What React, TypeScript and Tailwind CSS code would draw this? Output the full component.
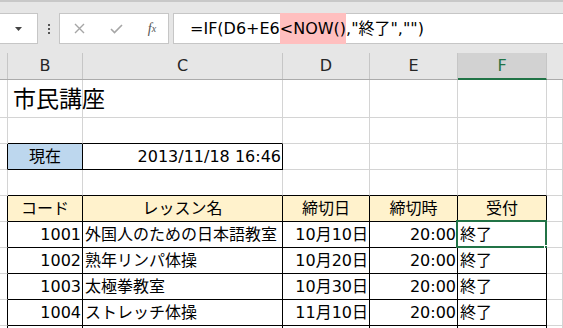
import React from "react";

const FONT = { fontFamily: '"DejaVu Sans", "Noto Sans CJK JP", sans-serif' };

type Cell = { text?: string; align?: "l" | "r" | "c"; bg?: string };

const COLS = 7;
const rowHeights = [38, 26, 26, 26, 26, 26, 26, 26, 26, 26];

function isBlack(r: number, c: number) {
  if (r === 2 && (c === 1 || c === 2)) return true;
  if (r >= 4 && r <= 9 && c >= 1 && c <= 5) return true;
  return false;
}

const data: Record<string, Cell> = {
  "2-1": { text: "現在", align: "c", bg: "bg-[#bdd7ee]" },
  "2-2": { text: "2013/11/18 16:46", align: "r" },
  "4-1": { text: "コード", align: "c", bg: "bg-[#fff2cc]" },
  "4-2": { text: "レッスン名", align: "c", bg: "bg-[#fff2cc]" },
  "4-3": { text: "締切日", align: "c", bg: "bg-[#fff2cc]" },
  "4-4": { text: "締切時", align: "c", bg: "bg-[#fff2cc]" },
  "4-5": { text: "受付", align: "c", bg: "bg-[#fff2cc]" },
  "5-1": { text: "1001", align: "r" },
  "5-2": { text: "外国人のための日本語教室", align: "l" },
  "5-3": { text: "10月10日", align: "r" },
  "5-4": { text: "20:00", align: "r" },
  "5-5": { text: "終了", align: "l" },
  "6-1": { text: "1002", align: "r" },
  "6-2": { text: "熟年リンパ体操", align: "l" },
  "6-3": { text: "10月20日", align: "r" },
  "6-4": { text: "20:00", align: "r" },
  "6-5": { text: "終了", align: "l" },
  "7-1": { text: "1003", align: "r" },
  "7-2": { text: "太極拳教室", align: "l" },
  "7-3": { text: "10月30日", align: "r" },
  "7-4": { text: "20:00", align: "r" },
  "7-5": { text: "終了", align: "l" },
  "8-1": { text: "1004", align: "r" },
  "8-2": { text: "ストレッチ体操", align: "l" },
  "8-3": { text: "11月10日", align: "r" },
  "8-4": { text: "20:00", align: "r" },
  "8-5": { text: "終了", align: "l" },
};

function GridCell({ r, c }: { r: number; c: number }) {
  const d = data[`${r}-${c}`];
  const rightBlack = isBlack(r, c) || isBlack(r, c + 1);
  const bottomBlack = isBlack(r, c) || isBlack(r + 1, c);
  const br = rightBlack ? "border-r-black" : "border-r-[#d4d4d4]";
  const bb = bottomBlack ? "border-b-black" : "border-b-[#d4d4d4]";
  const justify =
    d?.align === "r" ? "justify-end pr-[1px]" : d?.align === "c" ? "justify-center" : "justify-start pl-[2px]";
  const selected = r === 5 && c === 5;
  return (
    <div
      className={`relative border-r border-b ${br} ${bb} ${d?.bg ?? "bg-white"} flex items-center ${justify} overflow-visible whitespace-nowrap text-[16px] text-black leading-none`}
    >
      {d?.text && <span className="pt-[1px]">{d.text}</span>}
      {selected && (
        <>
          <div className="absolute left-[-2px] top-[-2px] right-[-1px] bottom-[-1px] border-2 border-[#217346] pointer-events-none" />
          <div className="absolute right-[-4px] bottom-[-4px] w-[6px] h-[6px] bg-[#217346] border border-white" />
        </>
      )}
    </div>
  );
}

export default function App() {
  const gridCols = "grid grid-cols-[8px_75px_200px_87px_88px_89px_1fr]";
  return (
    <div className="w-[563px] h-[328px] overflow-hidden bg-white" style={FONT}>
      {/* Formula bar */}
      <div className="h-[52px] bg-[#e6e6e6] border-t-2 border-t-[#c8c8c8] pt-[11px] flex items-start">
        <div className="w-[38px] h-[31px] bg-white border border-l-0 border-[#c6c6c6] flex items-center justify-start pl-[15px]">
          <svg width="7" height="4" viewBox="0 0 7 4">
            <polygon points="0,0 7,0 3.5,4" fill="#444" />
          </svg>
        </div>
        <div className="w-[21px] h-[31px] flex flex-col items-center justify-center gap-[2px]">
          <div className="w-[2px] h-[2px] bg-[#555]" />
          <div className="w-[2px] h-[2px] bg-[#555]" />
          <div className="w-[2px] h-[2px] bg-[#555]" />
        </div>
        <div className="w-[110px] h-[31px] bg-white border border-[#c6c6c6] flex items-center">
          <div className="w-[36px] flex justify-center pl-[2px]">
            <svg width="11" height="11" viewBox="0 0 11 11">
              <path d="M1 1 L10 10 M10 1 L1 10" stroke="#a6a6a6" strokeWidth="1.4" />
            </svg>
          </div>
          <div className="w-[40px] flex justify-center">
            <svg width="13" height="10" viewBox="0 0 13 10">
              <path d="M1 5 L4.5 8.5 L12 1" stroke="#a6a6a6" strokeWidth="1.6" fill="none" />
            </svg>
          </div>
          <div className="w-[32px] flex justify-center text-[#555] italic text-[14px] leading-none" style={{ fontFamily: '"Liberation Serif", serif' }}>
            f<span className="text-[10px] relative top-[2px]">x</span>
          </div>
        </div>
        <div className="flex-1 ml-[4px] h-[31px] bg-white border border-r-0 border-[#c6c6c6] flex items-stretch pl-[16px] text-[16px] text-black leading-none whitespace-nowrap">
          <span className="flex items-center">=IF(D6+E6</span>
          <span className="flex items-center bg-[#ffbfbf] my-[-1px]">&lt;NOW()</span>
          <span className="flex items-center">,"終了",""</span>
          <span className="flex items-center">)</span>
        </div>
      </div>

      {/* Column headers */}
      <div className={`${gridCols} h-[28px] bg-[#e6e6e6] border-b border-b-[#ababab] text-[16px] text-[#262626] leading-none`}>
        <div className="border-r border-r-[#c6c6c6] mt-[1px]" />
        {["B", "C", "D", "E"].map((l) => (
          <div key={l} className="border-r border-r-[#c6c6c6] flex items-center justify-center mt-[1px]">
            {l}
          </div>
        ))}
        <div className="bg-[#d2d2d2] border-r border-r-[#c6c6c6] border-b-2 border-b-[#217346] mb-[-1px] mt-[1px] flex items-center justify-center text-[#217346]">
          F
        </div>
        <div className="mt-[1px]" />
      </div>

      {/* Title row */}
      <div className={`${gridCols} h-[38px]`}>
        <div className="border-r border-b border-[#d4d4d4]" />
        <div className="relative border-r border-b border-[#d4d4d4]">
          <span className="absolute left-[5px] bottom-[6px] text-[23px] leading-none text-black whitespace-nowrap">市民講座</span>
        </div>
        {[2, 3, 4, 5, 6].map((c) => (
          <div key={c} className="border-r border-b border-[#d4d4d4]" />
        ))}
      </div>

      {/* Body rows */}
      {rowHeights.slice(1).map((h, i) => {
        const r = i + 1;
        return (
          <div key={r} className={`${gridCols} h-[26px]`}>
            {Array.from({ length: COLS }).map((_, c) => (
              <GridCell key={c} r={r} c={c} />
            ))}
          </div>
        );
      })}
    </div>
  );
}
